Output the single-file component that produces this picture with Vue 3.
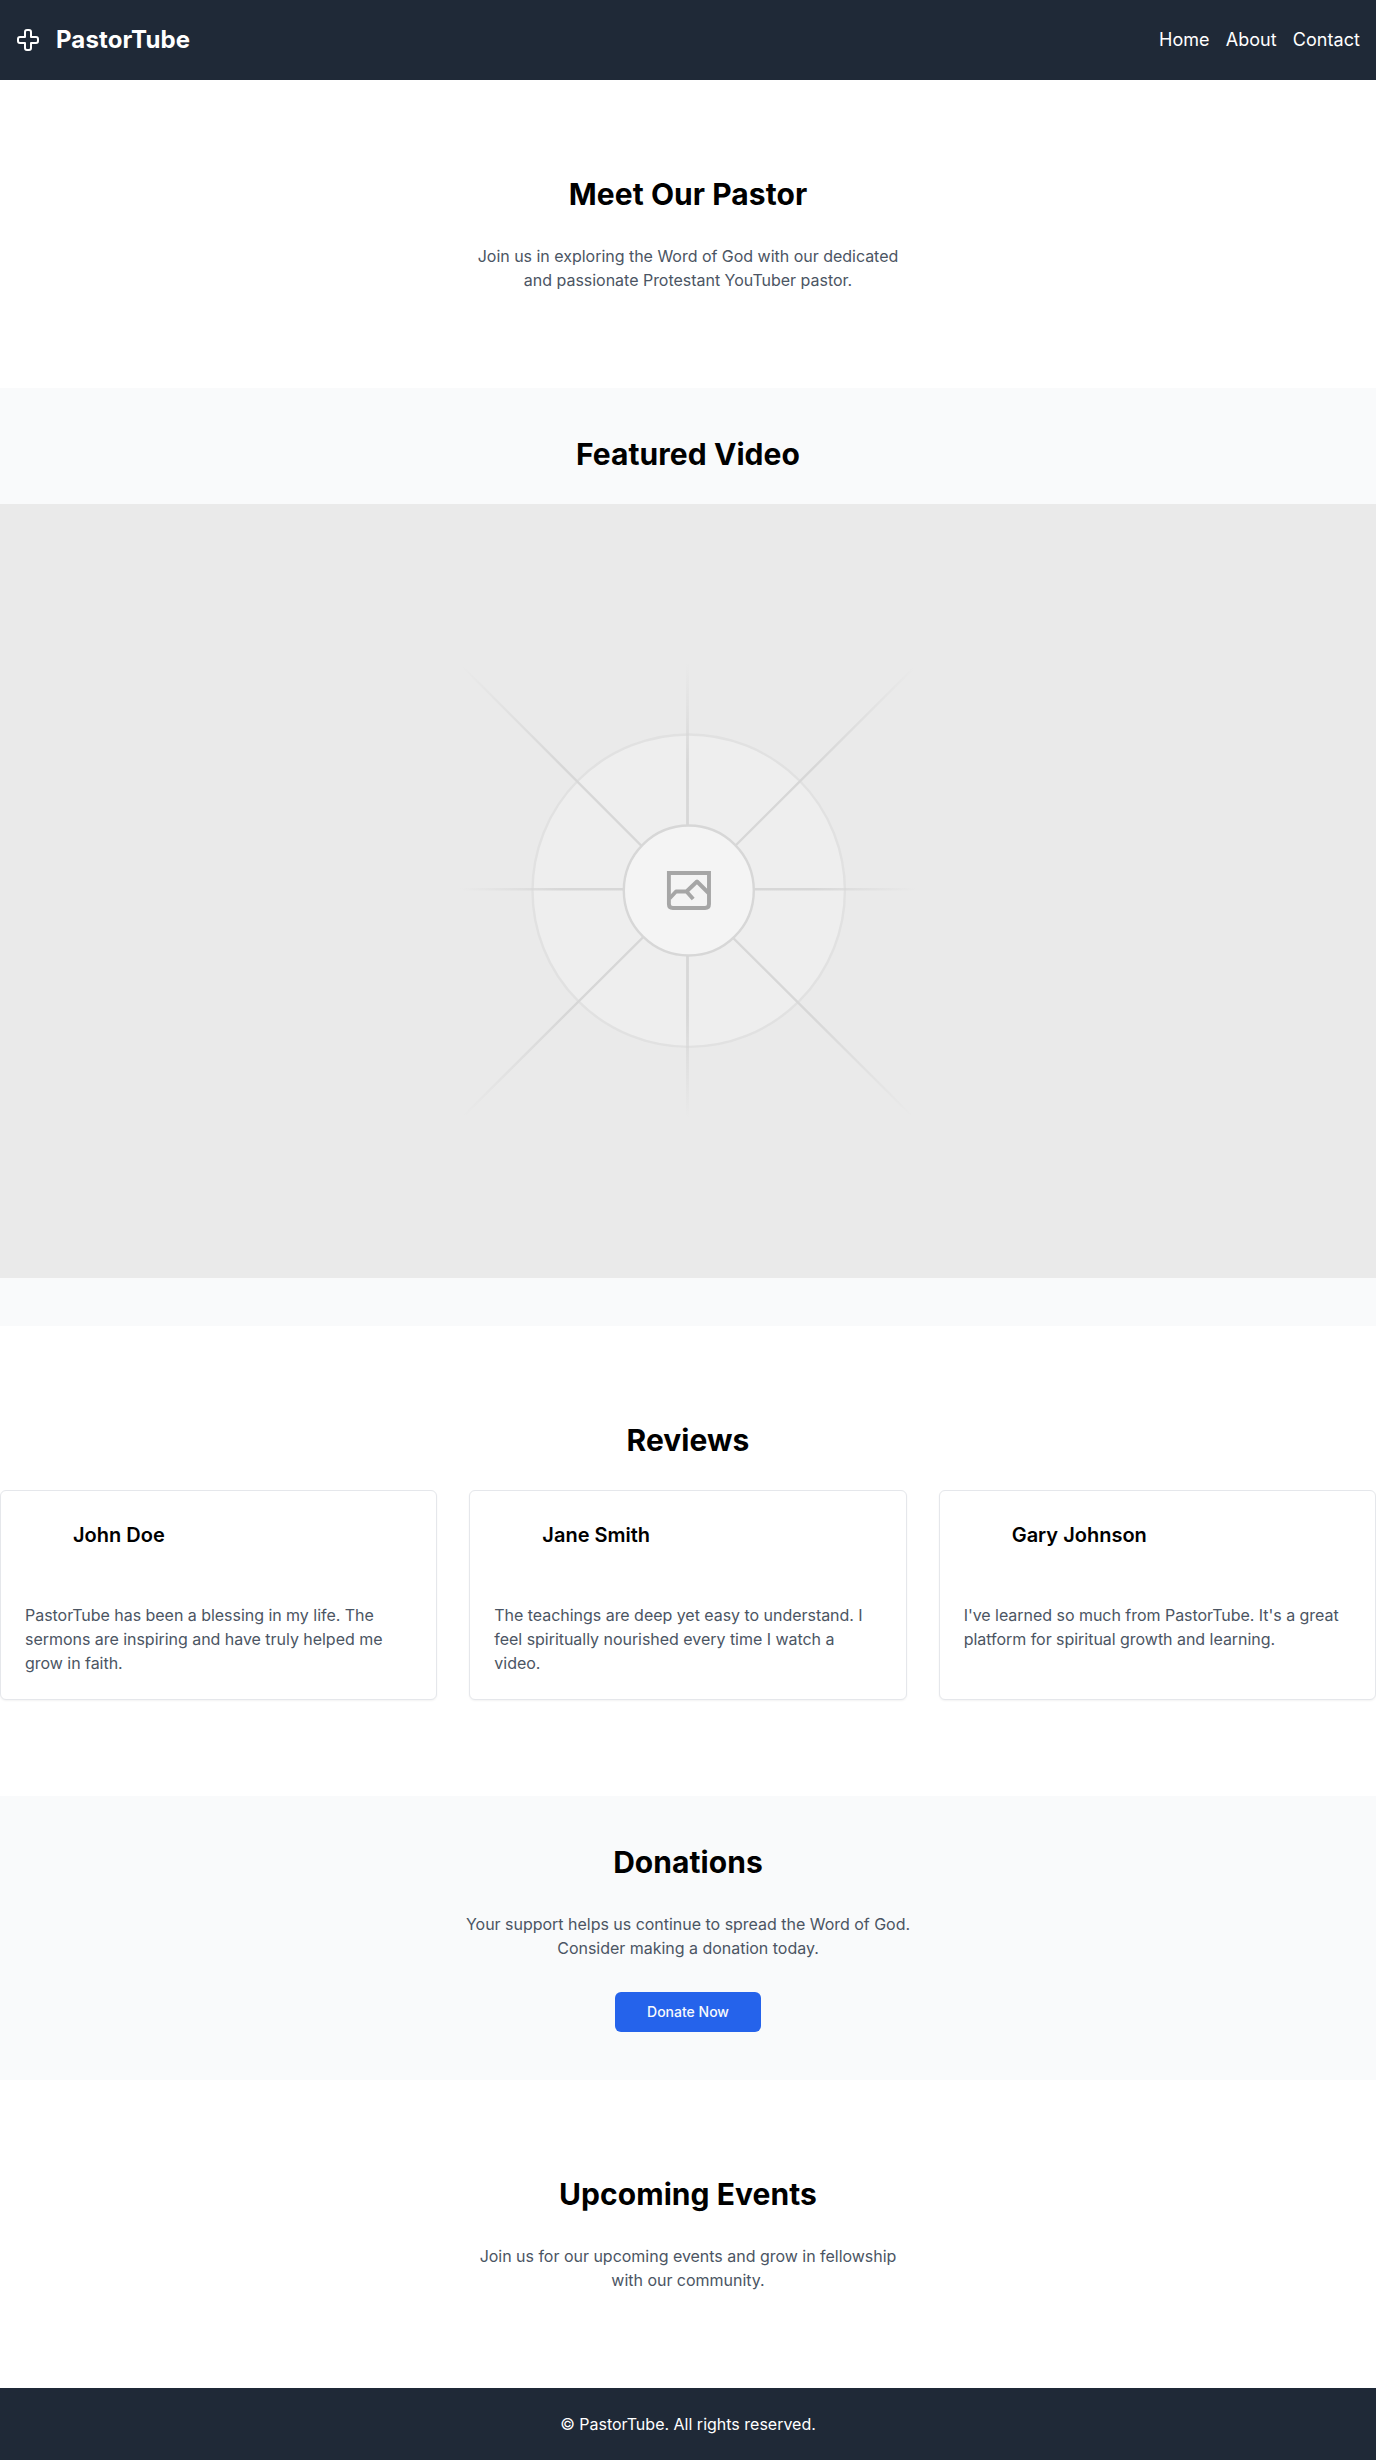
<script setup>
const links = ['Home', 'About', 'Contact']
const reviews = [
  {
    name: 'John Doe',
    text: 'PastorTube has been a blessing in my life. The sermons are inspiring and have truly helped me grow in faith.',
  },
  {
    name: 'Jane Smith',
    text: 'The teachings are deep yet easy to understand. I feel spiritually nourished every time I watch a video.',
  },
  {
    name: 'Gary Johnson',
    text: "I've learned so much from PastorTube. It's a great platform for spiritual growth and learning.",
  },
]
</script>

<template>
  <div class="page">
    <header class="header">
      <div class="brand">
        <svg class="brand-icon" width="24" height="24" viewBox="0 0 24 24" fill="none" stroke="currentColor" stroke-width="2" stroke-linecap="round" stroke-linejoin="round">
          <path d="M11 2a2 2 0 0 0-2 2v5H4a2 2 0 0 0-2 2v2c0 1.1.9 2 2 2h5v5c0 1.1.9 2 2 2h2a2 2 0 0 0 2-2v-5h5a2 2 0 0 0 2-2v-2a2 2 0 0 0-2-2h-5V4a2 2 0 0 0-2-2h-2z" />
        </svg>
        <h1 class="brand-name">PastorTube</h1>
      </div>
      <nav class="nav">
        <a v-for="link in links" :key="link" class="nav-link">{{ link }}</a>
      </nav>
    </header>

    <main>
      <section class="section">
        <h2 class="title">Meet Our Pastor</h2>
        <p class="lead">Join us in exploring the Word of God with our dedicated and passionate Protestant YouTuber pastor.</p>
      </section>

      <section class="section tinted">
        <h2 class="title">Featured Video</h2>
        <svg class="video" viewBox="0 0 1376 774">
          <defs>
            <radialGradient id="axis-fade" gradientUnits="userSpaceOnUse" cx="688" cy="386" r="228">
              <stop offset="0.55" stop-color="#d7d7d7" />
              <stop offset="1" stop-color="#d7d7d7" stop-opacity="0" />
            </radialGradient>
            <radialGradient id="diagonal-fade" gradientUnits="userSpaceOnUse" cx="688" cy="386" r="320">
              <stop offset="0.55" stop-color="#d7d7d7" />
              <stop offset="1" stop-color="#d7d7d7" stop-opacity="0" />
            </radialGradient>
          </defs>
          <rect width="1376" height="774" fill="#eaeaea" />
          <circle cx="688.7" cy="386.7" r="156.2" fill="#eeeeee" stroke="#e1e1e1" stroke-width="2.4" />
          <g fill="none" stroke-width="2.4">
            <path d="M687.5 158V614" stroke="url(#axis-fade)" stroke-width="2.8" />
            <path d="M460 385.3H916" stroke="url(#axis-fade)" />
            <path d="M463 163L688 388.5L463 612.5" stroke="url(#diagonal-fade)" />
            <path d="M913 164.5L688 389L913 613" stroke="url(#diagonal-fade)" />
          </g>
          <circle cx="688.8" cy="386.5" r="65" fill="#f4f4f4" stroke="#d7d7d7" stroke-width="2.4" />
          <g fill="none" stroke="#a6a6a6" stroke-width="3.9" stroke-linejoin="round">
            <path stroke-linejoin="miter" d="M668.9 369H709V400.1Q709 404 705.1 404H672.8Q668.9 404 668.9 400.1Z" />
            <path d="M669.5 394.5L676 387.5H686.5L697 377.5L708.5 389M686.5 387.5L693.2 395" />
          </g>
        </svg>
      </section>

      <section class="section">
        <h2 class="title">Reviews</h2>
        <div class="reviews">
          <article v-for="review in reviews" :key="review.name" class="card">
            <div class="card-head">
              <span class="avatar"></span>
              <h3 class="card-name">{{ review.name }}</h3>
            </div>
            <p class="card-text">{{ review.text }}</p>
          </article>
        </div>
      </section>

      <section class="section tinted">
        <h2 class="title">Donations</h2>
        <p class="lead">Your support helps us continue to spread the Word of God. Consider making a donation today.</p>
        <button class="donate">Donate Now</button>
      </section>

      <section class="section">
        <h2 class="title">Upcoming Events</h2>
        <p class="lead">Join us for our upcoming events and grow in fellowship with our community.</p>
      </section>
    </main>

    <footer class="footer">© PastorTube. All rights reserved.</footer>
  </div>
</template>

<style>
body {
  margin: 0;
  background: #fff;
}
</style>

<style scoped>
.page {
  font-family: Inter, sans-serif;
  font-size: 16px;
  line-height: 24px;
  color: #000;
}
h1, h2, h3, p {
  margin: 0;
}
.header {
  display: flex;
  align-items: center;
  justify-content: space-between;
  box-sizing: border-box;
  height: 80px;
  padding: 0 16px;
  background: #1f2937;
  color: #fff;
}
.brand {
  display: flex;
  align-items: center;
  gap: 16px;
}
.brand-name {
  font-size: 24px;
  line-height: 32px;
  font-weight: 700;
  letter-spacing: 0.12px;
}
.nav {
  display: flex;
  gap: 16px;
}
.nav-link {
  font-size: 18px;
  line-height: 28px;
  letter-spacing: 0.06px;
}
.section {
  display: flex;
  flex-direction: column;
  align-items: center;
  gap: 32px;
  padding: 96px 0;
}
.tinted {
  padding: 48px 0;
  background: #f9fafb;
}
.title {
  font-size: 30px;
  line-height: 36px;
  font-weight: 700;
  letter-spacing: 0.06px;
}
.lead {
  width: 448px;
  text-align: center;
  color: #4b5563;
  letter-spacing: -0.02px;
}
.video {
  display: block;
  width: 100%;
  height: auto;
}
.reviews {
  display: grid;
  grid-template-columns: repeat(3, 1fr);
  gap: 32px;
  width: 100%;
}
.card {
  border: 1px solid #e5e7eb;
  border-radius: 6px;
  padding: 24px;
  background: #fff;
  box-shadow: 0 1px 2px rgba(0, 0, 0, 0.05);
}
.card-head {
  display: flex;
  align-items: center;
  gap: 8px;
  margin-bottom: 48px;
}
.avatar {
  width: 40px;
  height: 40px;
  border-radius: 50%;
}
.card-name {
  font-size: 20px;
  line-height: 28px;
  font-weight: 600;
}
.card-text {
  color: #4b5563;
  letter-spacing: -0.035px;
}
.donate {
  height: 40px;
  padding: 0 32px;
  border: 0;
  border-radius: 6px;
  background: #2563eb;
  color: #f8fafc;
  font: 500 14px/20px Inter, sans-serif;
}
.footer {
  padding: 24px 0;
  background: #1f2937;
  color: #fff;
  text-align: center;
}
</style>
